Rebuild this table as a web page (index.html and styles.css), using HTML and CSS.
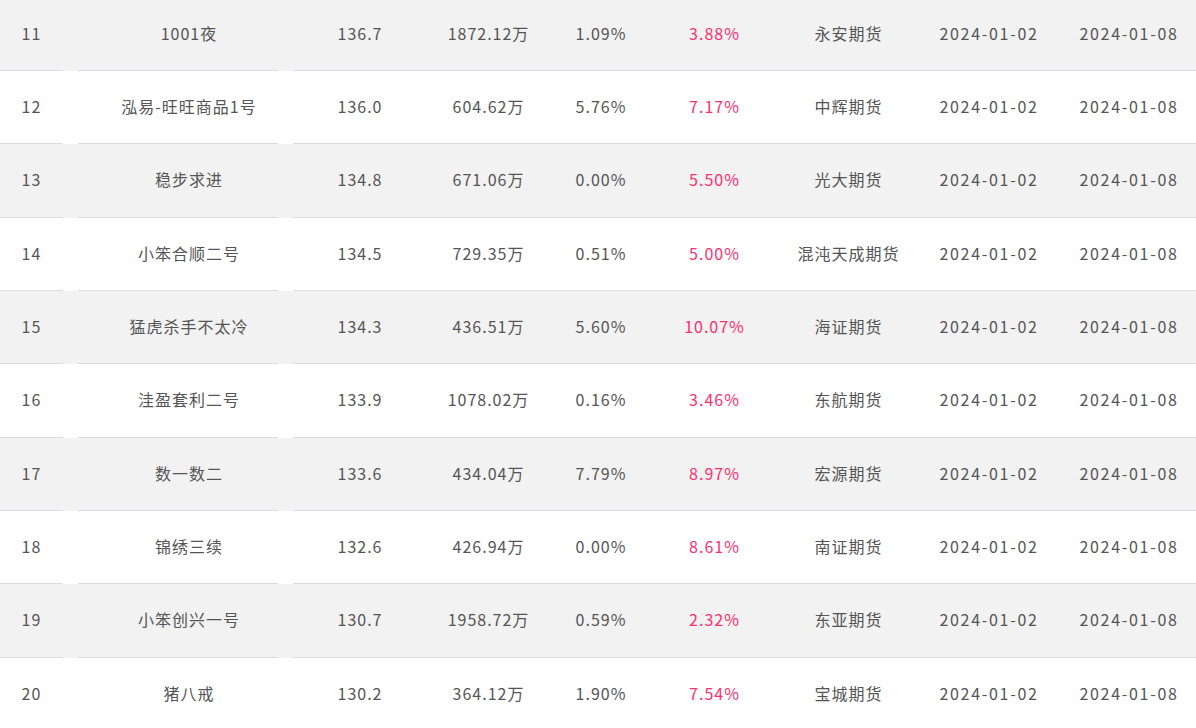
FILE: index.html
```html
<!DOCTYPE html>
<html lang="zh-CN">
<head>
<meta charset="utf-8">
<title>排行榜</title>
<link rel="stylesheet" href="styles.css">
</head>
<body>
<ul class="rank-list">
  <li class="row alt"><span class="c rank">11</span><span class="c name">1001夜</span><span class="c score">136.7</span><span class="c scale">1872.12万</span><span class="c dd">1.09%</span><span class="c ret">3.88%</span><span class="c broker">永安期货</span><span class="c date">2024-01-02</span><span class="c date end">2024-01-08</span></li>
  <li class="row"><span class="c rank">12</span><span class="c name">泓易-旺旺商品1号</span><span class="c score">136.0</span><span class="c scale">604.62万</span><span class="c dd">5.76%</span><span class="c ret">7.17%</span><span class="c broker">中辉期货</span><span class="c date">2024-01-02</span><span class="c date end">2024-01-08</span></li>
  <li class="row alt"><span class="c rank">13</span><span class="c name">稳步求进</span><span class="c score">134.8</span><span class="c scale">671.06万</span><span class="c dd">0.00%</span><span class="c ret">5.50%</span><span class="c broker">光大期货</span><span class="c date">2024-01-02</span><span class="c date end">2024-01-08</span></li>
  <li class="row"><span class="c rank">14</span><span class="c name">小笨合顺二号</span><span class="c score">134.5</span><span class="c scale">729.35万</span><span class="c dd">0.51%</span><span class="c ret">5.00%</span><span class="c broker">混沌天成期货</span><span class="c date">2024-01-02</span><span class="c date end">2024-01-08</span></li>
  <li class="row alt"><span class="c rank">15</span><span class="c name">猛虎杀手不太冷</span><span class="c score">134.3</span><span class="c scale">436.51万</span><span class="c dd">5.60%</span><span class="c ret">10.07%</span><span class="c broker">海证期货</span><span class="c date">2024-01-02</span><span class="c date end">2024-01-08</span></li>
  <li class="row"><span class="c rank">16</span><span class="c name">洼盈套利二号</span><span class="c score">133.9</span><span class="c scale">1078.02万</span><span class="c dd">0.16%</span><span class="c ret">3.46%</span><span class="c broker">东航期货</span><span class="c date">2024-01-02</span><span class="c date end">2024-01-08</span></li>
  <li class="row alt"><span class="c rank">17</span><span class="c name">数一数二</span><span class="c score">133.6</span><span class="c scale">434.04万</span><span class="c dd">7.79%</span><span class="c ret">8.97%</span><span class="c broker">宏源期货</span><span class="c date">2024-01-02</span><span class="c date end">2024-01-08</span></li>
  <li class="row"><span class="c rank">18</span><span class="c name">锦绣三续</span><span class="c score">132.6</span><span class="c scale">426.94万</span><span class="c dd">0.00%</span><span class="c ret">8.61%</span><span class="c broker">南证期货</span><span class="c date">2024-01-02</span><span class="c date end">2024-01-08</span></li>
  <li class="row alt"><span class="c rank">19</span><span class="c name">小笨创兴一号</span><span class="c score">130.7</span><span class="c scale">1958.72万</span><span class="c dd">0.59%</span><span class="c ret">2.32%</span><span class="c broker">东亚期货</span><span class="c date">2024-01-02</span><span class="c date end">2024-01-08</span></li>
  <li class="row"><span class="c rank">20</span><span class="c name">猪八戒</span><span class="c score">130.2</span><span class="c scale">364.12万</span><span class="c dd">1.90%</span><span class="c ret">7.54%</span><span class="c broker">宝城期货</span><span class="c date">2024-01-02</span><span class="c date end">2024-01-08</span></li>
</ul>
</body>
</html>
```
FILE: styles.css
```css
html, body {
  margin: 0;
  padding: 0;
  background: #ffffff;
  overflow: hidden;
}

.rank-list {
  list-style: none;
  margin: -2.33px 0 0 0;
  padding: 0;
  width: 1196px;
  font-family: "Noto Sans CJK SC", "Noto Sans", sans-serif;
  font-size: 16px;
  letter-spacing: 1px;
  color: #555555;
}

.row {
  display: flex;
  height: 73.33px;
  background: #ffffff;
}

.row.alt {
  background: #f2f2f2;
}

.c {
  display: flex;
  align-items: center;
  justify-content: center;
  box-sizing: border-box;
  height: 100%;
  padding-bottom: 2px;
  border-bottom: 1px solid #dcdce4;
  white-space: nowrap;
}

.rank { width: 63px; margin-right: 15px; }
.name { width: 200px; margin-right: 15px; padding-left: 22px; }
.score { width: 134px; }
.scale { width: 123px; }
.dd { width: 102px; }
.ret { width: 125px; color: #ff2f6f; }
.broker { width: 143px; }
.date { width: 138px; letter-spacing: 1.7px; }
.date.end { padding-left: 4px; }
```
